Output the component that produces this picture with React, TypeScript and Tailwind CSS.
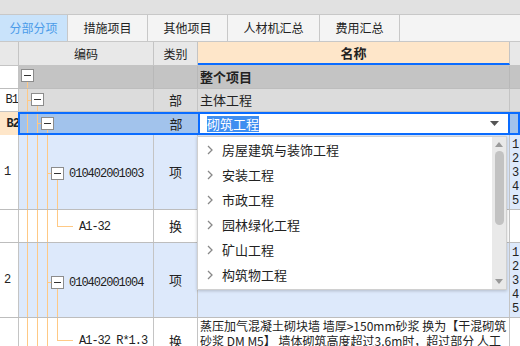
import React from "react";

const Box = ({ className }: { className: string }) => (
  <div
    className={`absolute w-[13px] h-[13px] bg-white border border-[#8c8c8c] flex items-center justify-center ${className}`}
  >
    <div className="w-[7px] h-[1px] bg-[#333]" />
  </div>
);

const line = "absolute bg-[#ffc985]";

const tabs = [
  { label: "分部分项", w: "w-[68px]", active: true },
  { label: "措施项目", w: "w-[80px]" },
  { label: "其他项目", w: "w-[80px]" },
  { label: "人材机汇总", w: "w-[92px]" },
  { label: "费用汇总", w: "w-[80px]" },
];

const menu = ["房屋建筑与装饰工程", "安装工程", "市政工程", "园林绿化工程", "矿山工程", "构筑物工程"];

const mono = "font-['Liberation_Mono',monospace] text-[12px] tracking-[-1px]";

function Nums() {
  return (
    <div className={`flex flex-col pt-[3px] pl-[2px] leading-[14px] ${mono} text-[#222]`}>
      <span>1</span>
      <span>2</span>
      <span>3</span>
      <span>4</span>
      <span>5</span>
    </div>
  );
}

export default function App() {
  return (
    <div className="relative w-[520px] h-[346px] overflow-hidden bg-white text-[#222] font-['Noto_Sans_CJK_SC','Noto_Sans',sans-serif] text-[12px]">
      <div className="h-[14px] bg-[#e1e1e1]" />

      {/* tabs */}
      <div className="flex h-[28px] bg-[#f4f4f4] border-t border-b border-[#c8c8c8]">
        {tabs.map((t) => (
          <div
            key={t.label}
            className={`${t.w} flex items-center justify-center border-r border-[#c8c8c8] ${
              t.active ? "bg-[#c9e3fb] text-[#4b9be9]" : ""
            }`}
          >
            {t.label}
          </div>
        ))}
      </div>

      {/* header */}
      <div className="grid grid-cols-[19px_135px_44px_312px_10px] h-[24px] bg-[#e8e8e8] border-b border-[#c4c4c4]">
        <div className="border-r border-[#c4c4c4]" />
        <div className="border-r border-[#c4c4c4] flex items-center justify-center">编码</div>
        <div className="border-r border-[#c4c4c4] flex items-center justify-center">类别</div>
        <div className="bg-[#fee6c9] border-r border-[#c4c4c4] border-b-2 border-b-[#0a6cff] flex items-center justify-center font-bold text-[13px]">
          名称
        </div>
        <div />
      </div>

      {/* 整个项目 */}
      <div className="grid grid-cols-[19px_135px_44px_312px_10px] h-[23px] border-b border-[#bdbdbd] bg-[#c4c4c4]">
        <div className="bg-white border-r border-[#c4c4c4]" />
        <div className="relative border-r border-[#b8b8b8]">
          <Box className="left-[2px] top-[3px]" />
          <div className={`${line} left-[8px] top-[16px] bottom-0 w-px`} />
        </div>
        <div className="border-r border-[#b8b8b8]" />
        <div className="flex items-center pl-[2px] font-bold text-[13px] border-r border-[#b8b8b8]">整个项目</div>
        <div />
      </div>

      {/* B1 */}
      <div className="grid grid-cols-[19px_135px_44px_312px_10px] h-[23px] border-b border-[#c4c4c4] bg-[#dcdcdc]">
        <div className="bg-white border-r border-[#c4c4c4] flex items-center justify-end overflow-hidden">
          <span className={`${mono} whitespace-nowrap`}>B1</span>
        </div>
        <div className="relative border-r border-[#c4c4c4]">
          <div className={`${line} left-[8px] top-0 bottom-0 w-px`} />
          <div className={`${line} left-[8px] top-[11px] w-[4px] h-px`} />
          <Box className="left-[12px] top-[4px]" />
          <div className={`${line} left-[18px] top-[17px] bottom-0 w-px`} />
        </div>
        <div className="border-r border-[#c4c4c4] flex items-center justify-center text-[13px]">部</div>
        <div className="flex items-center pl-[2px] text-[13px] border-r border-[#c4c4c4]">主体工程</div>
        <div />
      </div>

      {/* B2 selected */}
      <div className="relative grid grid-cols-[19px_135px_44px_312px_10px] h-[23px] bg-[#a2c3ec]">
        <div className="bg-[#fee6c9] flex items-center justify-end overflow-hidden">
          <span className={`${mono} font-bold whitespace-nowrap`}>B2</span>
        </div>
        <div className="relative">
          <div className={`${line} left-[8px] top-0 bottom-0 w-px`} />
          <div className={`${line} left-[18px] top-0 bottom-0 w-px`} />
          <div className={`${line} left-[18px] top-[11px] w-[4px] h-px`} />
          <Box className="left-[22px] top-[5px]" />
          <div className={`${line} left-[28px] top-[18px] bottom-0 w-px`} />
        </div>
        <div className="flex items-center justify-center text-[13px]">部</div>
        <div className="bg-white border-2 border-[#0a6cff] flex items-center pl-[7px] pr-[9px]">
          <span className="bg-[#3f8ef0] text-white text-[13px] leading-[16px]">砌筑工程</span>
          <span className="ml-auto">
            <svg width="9" height="6" viewBox="0 0 9 6">
              <polygon points="0,0 9,0 4.5,5" fill="#555" />
            </svg>
          </span>
        </div>
        <div />
        <div className="absolute left-[18px] right-0 top-0 bottom-0 border-2 border-[#0a6cff] pointer-events-none" />
      </div>

      {/* row 1 */}
      <div className="grid grid-cols-[19px_135px_44px_312px_10px] h-[75px] border-b border-[#bdbdbd]">
        <div className="bg-white border-r border-[#c4c4c4] flex items-center pl-[4px]">
          <span className={mono}>1</span>
        </div>
        <div className="relative bg-[#dde9fb] border-r border-[#c4c4c4]">
          <div className={`${line} left-[8px] top-0 bottom-0 w-px`} />
          <div className={`${line} left-[18px] top-0 bottom-0 w-px`} />
          <div className={`${line} left-[28px] top-0 bottom-0 w-px`} />
          <div className={`${line} left-[28px] top-[38px] w-[4px] h-px`} />
          <Box className="left-[32px] top-[32px]" />
          <div className={`${line} left-[38px] top-[45px] bottom-0 w-px`} />
          <div className={`absolute left-[50px] top-[30px] ${mono}`}>010402001003</div>
        </div>
        <div className="bg-[#dde9fb] border-r border-[#c4c4c4] flex items-center justify-center text-[13px]">项</div>
        <div className="bg-[#dde9fb] border-r border-[#c4c4c4]" />
        <div className="bg-[#dde9fb]">
          <Nums />
        </div>
      </div>

      {/* A1-32 */}
      <div className="grid grid-cols-[19px_135px_44px_312px_10px] h-[33px] border-b border-[#bdbdbd]">
        <div className="border-r border-[#c4c4c4]" />
        <div className="relative border-r border-[#c4c4c4]">
          <div className={`${line} left-[8px] top-0 bottom-0 w-px`} />
          <div className={`${line} left-[18px] top-0 bottom-0 w-px`} />
          <div className={`${line} left-[28px] top-0 bottom-0 w-px`} />
          <div className={`${line} left-[38px] top-0 h-[16px] w-px`} />
          <div className={`${line} left-[38px] top-[16px] w-[16px] h-px`} />
          <div className={`absolute left-[60px] top-[8px] ${mono}`}>A1-32</div>
        </div>
        <div className="border-r border-[#c4c4c4] flex items-center justify-center text-[13px]">换</div>
        <div className="border-r border-[#c4c4c4]" />
        <div />
      </div>

      {/* row 2 */}
      <div className="grid grid-cols-[19px_135px_44px_312px_10px] h-[75px] border-b border-[#bdbdbd]">
        <div className="bg-white border-r border-[#c4c4c4] flex items-center pl-[4px]">
          <span className={mono}>2</span>
        </div>
        <div className="relative bg-[#dde9fb] border-r border-[#c4c4c4]">
          <div className={`${line} left-[8px] top-0 bottom-0 w-px`} />
          <div className={`${line} left-[18px] top-0 bottom-0 w-px`} />
          <div className={`${line} left-[28px] top-0 bottom-0 w-px`} />
          <div className={`${line} left-[28px] top-[39px] w-[4px] h-px`} />
          <Box className="left-[32px] top-[33px]" />
          <div className={`${line} left-[38px] top-[46px] bottom-0 w-px`} />
          <div className={`absolute left-[50px] top-[31px] ${mono}`}>010402001004</div>
        </div>
        <div className="bg-[#dde9fb] border-r border-[#c4c4c4] flex items-center justify-center text-[13px]">项</div>
        <div className="bg-[#dde9fb] border-r border-[#c4c4c4]" />
        <div className="bg-[#dde9fb]">
          <Nums />
        </div>
      </div>

      {/* A1-32 R*1.3 */}
      <div className="grid grid-cols-[19px_135px_44px_312px_10px] h-[40px]">
        <div className="border-r border-[#c4c4c4]" />
        <div className="relative border-r border-[#c4c4c4]">
          <div className={`${line} left-[8px] top-0 bottom-0 w-px`} />
          <div className={`${line} left-[18px] top-0 bottom-0 w-px`} />
          <div className={`${line} left-[28px] top-0 bottom-0 w-px`} />
          <div className={`${line} left-[38px] top-0 h-[22px] w-px`} />
          <div className={`${line} left-[38px] top-[22px] w-[16px] h-px`} />
          <div className={`absolute left-[60px] top-[14px] ${mono} whitespace-nowrap`}>A1-32 R*1.3</div>
        </div>
        <div className="border-r border-[#c4c4c4] flex items-start pt-[13px] justify-center text-[13px]">换</div>
        <div className="border-r border-[#c4c4c4] pl-[2px] leading-[15px] overflow-hidden whitespace-nowrap">
          <div>蒸压加气混凝土砌块墙 墙厚&gt;150mm砂浆  换为【干混砌筑</div>
          <div>砂浆 DM M5】 墙体砌筑高度超过3.6m时，超过部分 人工</div>
        </div>
        <div />
      </div>

      {/* dropdown */}
      <div className="absolute left-[197px] top-[136px] w-[310px] h-[154px] bg-white border border-[#d0d0d0] shadow-[0_1px_3px_rgba(0,0,0,0.2)] flex">
        <div className="flex-1 flex flex-col">
          {menu.map((m) => (
            <div key={m} className="h-[25px] flex items-center text-[13px]">
              <svg width="6" height="10" viewBox="0 0 6 10" className="ml-[9px] mr-[9px]">
                <polyline points="1,1 5,5 1,9" fill="none" stroke="#888" strokeWidth="1.3" />
              </svg>
              {m}
            </div>
          ))}
        </div>
        <div className="w-[14px] bg-[#e9e9e9] flex flex-col items-center py-[5px]">
          <svg width="8" height="5" viewBox="0 0 8 5">
            <polygon points="0,5 8,5 4,0" fill="#9a9a9a" />
          </svg>
          <div className="w-[9px] h-[74px] mt-[4px] rounded-full bg-[#c2c2c2]" />
          <div className="flex-1" />
          <svg width="8" height="5" viewBox="0 0 8 5">
            <polygon points="0,0 8,0 4,5" fill="#9a9a9a" />
          </svg>
        </div>
      </div>
    </div>
  );
}
